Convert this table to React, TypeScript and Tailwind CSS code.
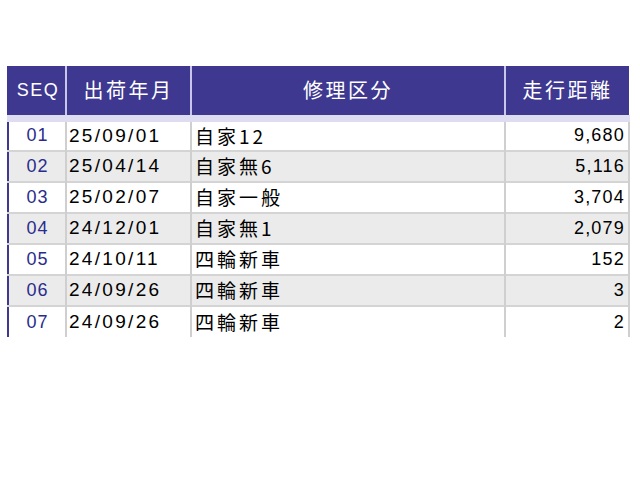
const rows = [
  { seq: "01", date: "25/09/01", kind: "自家12", km: "9,680" },
  { seq: "02", date: "25/04/14", kind: "自家無6", km: "5,116" },
  { seq: "03", date: "25/02/07", kind: "自家一般", km: "3,704" },
  { seq: "04", date: "24/12/01", kind: "自家無1", km: "2,079" },
  { seq: "05", date: "24/10/11", kind: "四輪新車", km: "152" },
  { seq: "06", date: "24/09/26", kind: "四輪新車", km: "3" },
  { seq: "07", date: "24/09/26", kind: "四輪新車", km: "2" },
];

const jp = "font-['Noto_Sans_CJK_JP',sans-serif]";
const num = "font-['Liberation_Sans','Noto_Sans_CJK_JP',sans-serif]";

export default function App() {
  return (
    <div className="h-[480px] w-[640px] overflow-hidden bg-white pl-[7px] pt-[66px]">
      <table className="w-[621px] table-fixed border-collapse border-l-2 border-l-[#3e3890]">
        <colgroup>
          <col className="w-[58px]" />
          <col className="w-[125px]" />
          <col className="w-[314px]" />
          <col className="w-[124px]" />
        </colgroup>
        <thead>
          <tr className="h-[52px] border-b-[7px] border-b-[#dedcf0] bg-[#3e3890] text-white">
            <th className={`pl-[2px] text-center ${num} text-[18px] font-normal tracking-[1.5px]`}>
              SEQ
            </th>
            <th className={`border-l-2 border-l-[#c9c6ea] text-center ${jp} text-[20px] font-normal tracking-[2.5px]`}>
              出荷年月
            </th>
            <th className={`border-l-2 border-l-[#c9c6ea] text-center ${jp} text-[20px] font-normal tracking-[2.5px]`}>
              修理区分
            </th>
            <th className={`border-l-2 border-l-[#c9c6ea] text-center ${jp} text-[20px] font-normal tracking-[2.5px]`}>
              走行距離
            </th>
          </tr>
        </thead>
        <tbody>
          {rows.map((r, i) => (
            <tr
              key={r.seq}
              className={`h-[31px] ${i < rows.length - 1 ? "border-b-2 border-b-[#d4d4d4]" : ""} ${i % 2 === 1 ? "bg-[#ebebeb]" : "bg-white"}`}
            >
              <td className={`pl-[1px] text-center ${num} text-[18px] tracking-[1px] text-[#2a2c8c]`}>
                {r.seq}
              </td>
              <td className={`border-l-2 border-l-[#cfcfcf] pl-[2px] ${num} text-[19px] tracking-[2.3px] text-black`}>
                {r.date}
              </td>
              <td className={`border-l-2 border-l-[#cfcfcf] pl-[3px] ${jp} text-[19px] tracking-[3px] text-black`}>
                {r.kind}
              </td>
              <td className={`border-x-2 border-x-[#cfcfcf] pr-[3px] text-right ${num} text-[18px] tracking-[1.2px] text-black`}>
                {r.km}
              </td>
            </tr>
          ))}
        </tbody>
      </table>
    </div>
  );
}
